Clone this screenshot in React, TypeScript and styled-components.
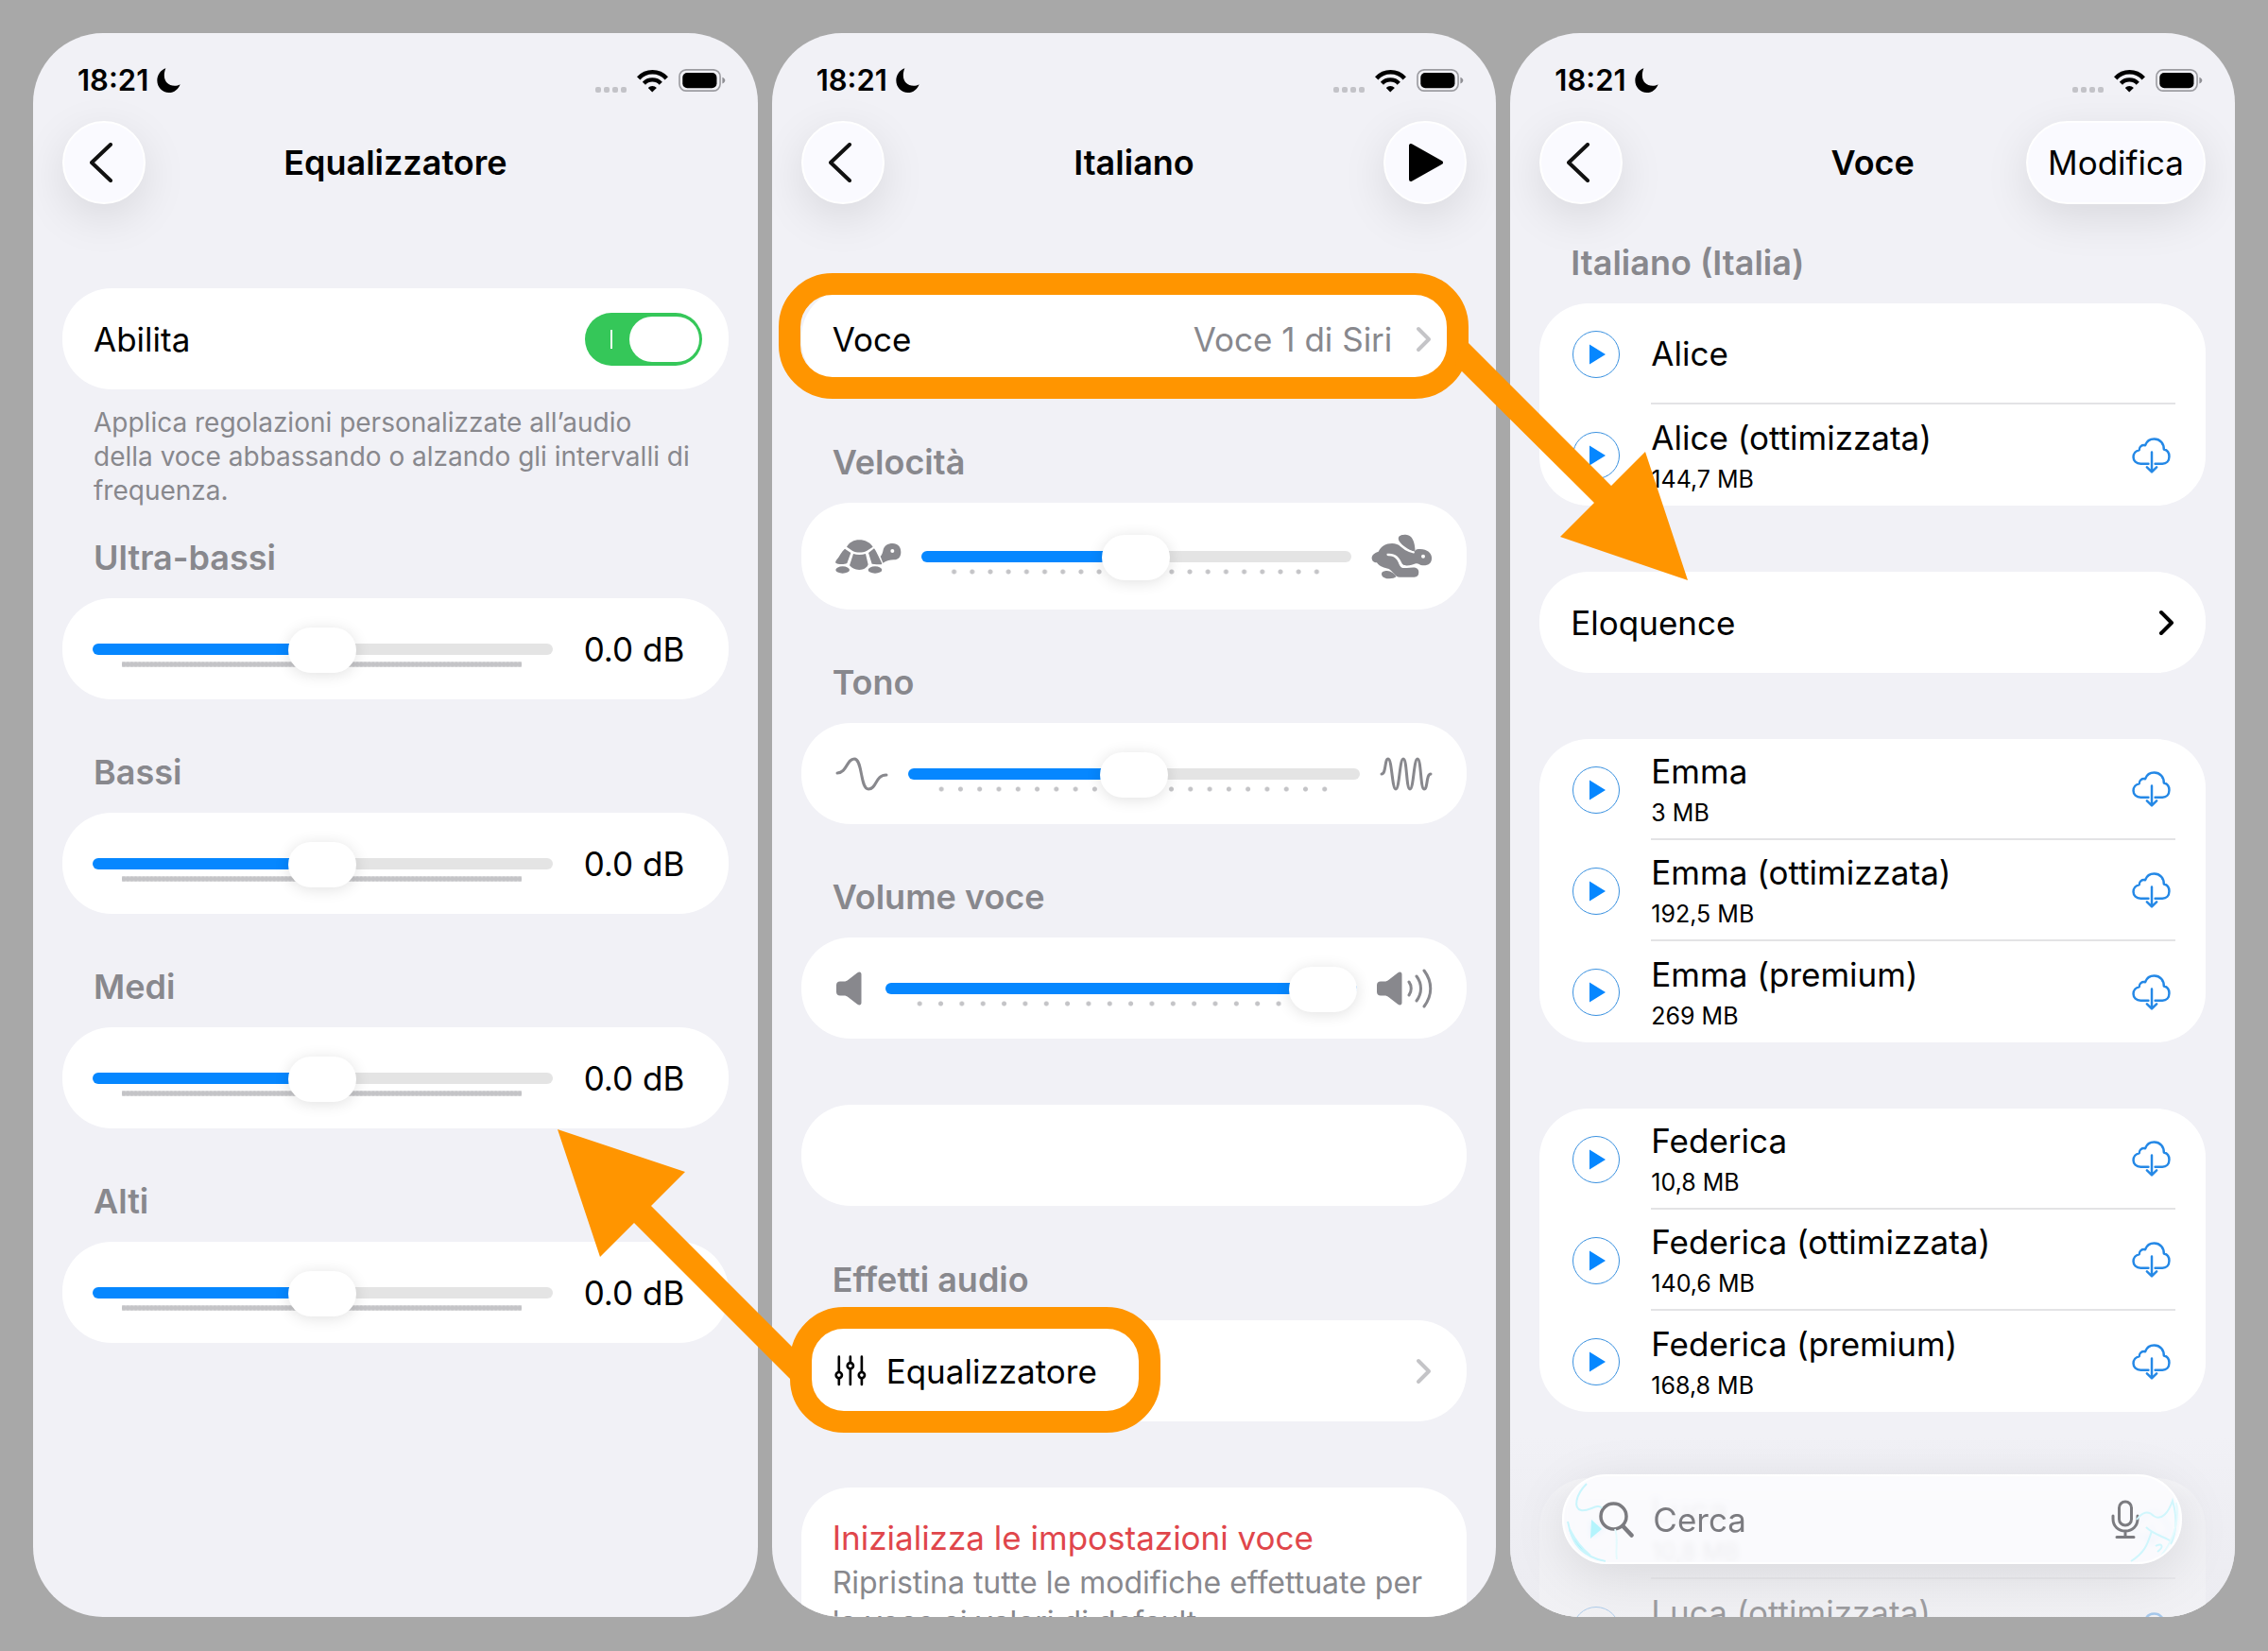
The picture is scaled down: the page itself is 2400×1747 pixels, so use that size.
import React, { useId, useState } from "react";
import styled, { createGlobalStyle, css } from "styled-components";

const color = {
  page: "#a8a8a8",
  screen: "#f1f1f6",
  card: "#ffffff",
  text: "#000000",
  muted: "#88888d",
  faint: "#c4c4c7",
  line: "#e3e3e5",
  track: "#e4e4e4",
  blue: "#0687ff",
  ring: "#3a91e0",
  green: "#35c759",
  red: "#e0464b",
  orange: "#ff9500",
};

const GlobalStyle = createGlobalStyle`
  *, *::before, *::after { box-sizing: border-box; }
  body {
    margin: 0;
    background: ${color.page};
    color: ${color.text};
    font-family: Inter, "Liberation Sans", sans-serif;
    font-size: 35px;
    line-height: 44px;
  }
  button, input { font: inherit; color: inherit; }
  h1, h2, p, ul { margin: 0; padding: 0; font: inherit; }
  svg { display: block; flex: none; }
`;

/* ---------- screens ---------- */

const Board = styled.main`
  position: relative;
  display: grid;
  grid-template-columns: repeat(3, 1fr);
  gap: 15px;
  height: 100vh;
  padding: 35px 35px 36px;
`;

const Screen = styled.section`
  position: relative;
  min-width: 0;
  overflow: hidden;
  border-radius: 74px;
  background: ${color.screen};
`;

const StatusBar = styled.div`
  display: flex;
  align-items: center;
  justify-content: space-between;
  padding: 31px 34px 24px 47px;
  font-size: 31px;
  font-weight: 600;
  line-height: 38px;
`;

const StatusGroup = styled.div`
  display: flex;
  align-items: center;
  gap: 9px;
`;

const SignalGroup = styled(StatusGroup)`
  gap: 11px;
`;

const SignalDots = styled.span`
  display: flex;
  align-self: flex-end;
  gap: 3px;
`;

const SignalDot = styled.i`
  width: 6px;
  height: 6px;
  border-radius: 2px;
  background: #c3c3c8;
`;

const NavBar = styled.header`
  display: grid;
  grid-template-columns: 1fr auto 1fr;
  align-items: center;
  height: 88px;
  padding: 0 31px;
`;

const NavTitle = styled.h1`
  && {
    font-size: 36px;
    font-weight: 600;
  }
`;

const NavButton = styled.button<{ $wide?: boolean; $end?: boolean }>`
  display: flex;
  align-items: center;
  justify-content: center;
  justify-self: ${(p) => (p.$end ? "end" : "start")};
  width: ${(p) => (p.$wide ? "190px" : "88px")};
  height: 88px;
  padding: 0;
  border: 2px solid #ffffff;
  border-radius: 44px;
  background: #fafaff;
  box-shadow: 0 14px 48px rgba(0, 0, 0, 0.1);
`;

const Content = styled.div<{ $compact?: boolean }>`
  display: flex;
  flex-direction: column;
  gap: 70px;
  padding: ${(p) => (p.$compact ? "40px" : "89px")} 31px 0;
`;

/* ---------- cards and rows ---------- */

const Group = styled.section<{ $pull?: number }>`
  display: flex;
  flex-direction: column;
  gap: 21px;
  margin-top: ${(p) => -(p.$pull ?? 0)}px;
`;

const heading = css`
  padding: 0 33px;
  color: ${color.muted};
  font-size: 36px;
  font-weight: 600;
`;

const GroupLabel = styled.label`
  ${heading}
`;

const GroupTitle = styled.h2`
  && { ${heading} }
`;

const Card = styled.div`
  position: relative;
  min-height: 107px;
  border-radius: 52px;
  background: ${color.card};
`;

const cardRow = css`
  display: flex;
  align-items: center;
  min-height: 107px;
  color: inherit;
  text-decoration: none;
`;

const LinkRow = styled.a<{ $tight?: boolean }>`
  ${cardRow}
  padding: 0 ${(p) => (p.$tight ? "33px" : "37px")} 0 33px;
`;

const ToggleRow = styled.label`
  ${cardRow}
  justify-content: space-between;
  padding: 0 28px 0 33px;
`;

const RowText = styled.span`
  flex: 1;
`;

const RowValue = styled.span`
  margin-right: 24px;
  color: ${color.muted};
`;

const RowIcon = styled.span`
  margin: 0 21px 0 2px;
`;

const Footnote = styled.p`
  && {
    margin: -4px 0 0;
    padding: 0 33px;
    color: ${color.muted};
    font-size: 28px;
    line-height: 36px;
  }
`;

const Switch = styled.input`
  appearance: none;
  position: relative;
  width: 124px;
  height: 56px;
  margin: 0;
  border-radius: 28px;
  background: ${color.green};

  &::before {
    content: "";
    position: absolute;
    top: 18px;
    left: 27px;
    width: 2px;
    height: 20px;
    background: #ffffff;
  }

  &::after {
    content: "";
    position: absolute;
    top: 4px;
    right: 3px;
    width: 74px;
    height: 48px;
    border-radius: 24px;
    background: #ffffff;
  }

  &:not(:checked) { background: ${color.track}; }
  &:not(:checked)::after { right: 47px; }
`;

const ResetCard = styled(Card)`
  display: flex;
  flex-direction: column;
  align-items: flex-start;
  gap: 5px;
  padding: 31px 33px;
`;

const ResetButton = styled.button`
  padding: 0;
  border: 0;
  background: none;
  color: ${color.red};
`;

const ResetNote = styled.p`
  && {
    color: ${color.muted};
    font-size: 32px;
    line-height: 42px;
  }
`;

/* ---------- sliders ---------- */

const SliderRow = styled.div<{ $tall?: boolean; $icons?: boolean }>`
  display: flex;
  align-items: center;
  gap: ${(p) => (p.$icons ? "21px" : "33px")};
  height: ${(p) => (p.$tall ? "113px" : "107px")};
  padding: 0 ${(p) => (p.$icons ? "36px" : "32px")};
  color: ${color.muted};
`;

const SliderBox = styled.div`
  position: relative;
  display: flex;
  flex: 1;
  min-width: 0;
`;

const Ticks = styled.div<{ $count: number }>`
  position: absolute;
  top: 37px;
  left: ${(p) => (p.$count > 50 ? "31px" : "25px")};
  right: ${(p) => (p.$count > 50 ? "33px" : "27px")};
  height: 6px;
  background-image: radial-gradient(
    circle at center,
    ${color.faint} 2px,
    ${(p) => (p.$count > 50 ? "rgba(196, 196, 199, 0.6)" : "rgba(196, 196, 199, 0)")} 3px
  );
  background-size: calc(100% / ${(p) => p.$count}) 6px;
`;

const Range = styled.input`
  appearance: none;
  position: relative;
  width: 100%;
  height: 48px;
  margin: 0;
  background: none;

  &::-webkit-slider-runnable-track {
    height: 12px;
    border-radius: 6px;
    background: linear-gradient(
      to right,
      ${color.blue} var(--fill),
      ${color.track} var(--fill)
    );
  }

  &::-webkit-slider-thumb {
    appearance: none;
    width: 72px;
    height: 48px;
    margin-top: -17px;
    border-radius: 24px;
    background: #ffffff;
    box-shadow: 0 2px 16px rgba(0, 0, 0, 0.12);
  }
`;

const Value = styled.output`
  width: 121px;
  color: ${color.text};
  white-space: nowrap;
`;

/* ---------- voices ---------- */

const VoiceList = styled.ul`
  list-style: none;
`;

const VoiceRow = styled.li`
  display: flex;
  align-items: center;
  gap: 33px;
  padding: 0 32px 0 35px;
`;

const PlayButton = styled.button`
  display: flex;
  align-items: center;
  justify-content: center;
  flex: none;
  width: 50px;
  height: 50px;
  padding: 0;
  border: 1px solid ${color.ring};
  border-radius: 50%;
  background: none;
`;

const VoiceBody = styled.div`
  display: flex;
  flex: 1;
  align-items: center;
  justify-content: space-between;
  height: 107px;
  padding-right: 5px;

  ${VoiceRow}:not(:last-child) & {
    border-bottom: 2px solid ${color.line};
  }
`;

const VoiceText = styled.div`
  display: flex;
  flex-direction: column;
  gap: 7px;
`;

const VoiceSize = styled.span`
  font-size: 25px;
  line-height: 30px;
`;

const IconButton = styled.button`
  padding: 0;
  border: 0;
  background: none;
`;

const Veil = styled.div`
  position: absolute;
  inset: auto 0 0;
  height: 190px;
  background: linear-gradient(
    rgba(240, 240, 245, 0),
    rgba(238, 238, 243, 0.8) 35%,
    rgba(233, 233, 238, 0.66)
  );
`;

const SearchField = styled.label`
  position: absolute;
  right: 56px;
  bottom: 56px;
  left: 55px;
  display: flex;
  align-items: center;
  gap: 20px;
  height: 95px;
  padding: 0 43px 0 37px;
  overflow: hidden;
  border: 2px solid #ffffff;
  border-radius: 48px;
  background: rgba(252, 252, 255, 0.8);
  backdrop-filter: blur(3px);
  box-shadow: 0 12px 56px rgba(0, 0, 0, 0.1);
  color: #7b7b80;
`;

const SearchInput = styled.input`
  flex: 1;
  min-width: 0;
  padding: 0;
  border: 0;
  outline: 0;
  background: none;

  &::placeholder { color: #7b7b80; opacity: 1; }
`;

const Glint = styled.svg<{ $end?: boolean }>`
  position: absolute;
  top: 0;
  ${(p) => (p.$end ? "right: 0;" : "left: 0;")}
`;

/* ---------- annotations ---------- */

const Ring = styled.span<{ $short?: boolean }>`
  position: absolute;
  top: ${(p) => (p.$short ? "-14px" : "-16px")};
  left: ${(p) => (p.$short ? "-12px" : "-24px")};
  ${(p) => (p.$short ? "width: 392px;" : "right: -2px;")}
  height: 133px;
  border: 23px solid ${color.orange};
  border-radius: 57px;
  pointer-events: none;
`;

const Arrows = styled.svg`
  position: absolute;
  inset: 0;
  width: 100%;
  height: 100%;
  fill: ${color.orange};
  pointer-events: none;
`;

/* ---------- icons ---------- */

const Moon = () => (
  <svg width="25" height="26" viewBox="0 0 24 25" fill="#000">
    <path d="M9 .3C8 2.5 7.5 5 7.5 7.5 7.5 14 12 18 18 18c2 0 4-.5 5.7-1.5C22 21.5 17.5 25 12.3 25 5.5 25 .3 19.5.3 12.8.3 7 3.8 2.1 9 .3Z" />
  </svg>
);

const Wifi = () => (
  <svg width="33" height="25" viewBox="221 64 98 74" fill="none" stroke="#000">
    <path d="M226 93C250 67 290 67 314 93" strokeWidth="14" />
    <path d="M243 109C257 94 282 94 296 109" strokeWidth="13" />
    <path d="M256 123C263 115 276 115 283 123L269 137Z" fill="#000" stroke="none" />
  </svg>
);

const Battery = () => (
  <svg width="50" height="24" viewBox="348 66 152 72">
    <rect x="351" y="68" width="131" height="68" rx="22" fill="none" stroke="#9c9ca1" strokeWidth="5" />
    <rect x="361" y="78" width="110" height="49" rx="15" />
    <path d="M489 92C496 95 498 99 498 102S496 110 489 113Z" fill="#8f8f94" />
  </svg>
);

const BackArrow = () => (
  <svg width="30" height="42" viewBox="0 0 30 42" fill="none" stroke="#111" strokeWidth="4" strokeLinecap="round" strokeLinejoin="round">
    <path d="M22 2 2 21 22 40" />
  </svg>
);

const PlayLarge = () => (
  <svg width="38" height="42" viewBox="-1 0 38 42" stroke="#000" strokeWidth="4" strokeLinejoin="round">
    <path d="M3 3v36L35 21Z" />
  </svg>
);

const PlaySmall = () => (
  <svg width="20" height="22" viewBox="0 0 20 22" fill={color.blue}>
    <path d="M3 .5v21L20 11Z" />
  </svg>
);

const Chevron = ({ dark }: { dark?: boolean }) => (
  <svg
    width="18"
    height="28"
    viewBox="0 0 18 28"
    fill="none"
    stroke={dark ? "#000" : color.faint}
    strokeWidth="4"
    strokeLinecap="round"
    strokeLinejoin="round"
  >
    <path d="M4 3 15 14 4 25" />
  </svg>
);

const CloudDownload = () => (
  <svg width="41" height="38" viewBox="0 0 40 37" fill="none" stroke="#2488e6" strokeWidth="2.4" strokeLinecap="round" strokeLinejoin="round">
    <path d="M17 27H9C4.500 27 1.500 24 1.500 20.200 1.500 16.500 4 13.500 7.500 13 7.500 9.300 10.200 7.300 13.700 8 15.200 4 18.600 1.500 23 1.500 29 1.500 33 6 33 12.200 36.500 13 38.500 16 38.500 19.500 38.500 24 35.500 27 31.500 27H24" />
    <path d="M20.500 15V35M15.500 30.500 20.500 35.500 25.500 30.500" />
  </svg>
);

const Turtle = () => (
  <svg width="70" height="38" viewBox="44 62 210 114" fill={color.muted}>
    <path d="M80 88C88 74 102 66 120 66S154 74 163 88L143 101C130 107 111 107 99 101Z" />
    <path d="M101 110C113 114 128 114 140 110L148 144C146 153 134 161 120 161S95 154 89 147Z" />
    <path d="M74 94 93 107 81 140C72 144 61 143 52 142 43 141 43 136 47 130 58 118 62 104 74 94Z" />
    <path d="M167 93 149 107 160 142C170 144 179 143 190 144L192 141 181 118C176 108 172 100 167 93Z" />
    <path d="M226 77C242 77 252 88 252 104S244 129 230 129C217 129 208 131 195 139L187 118C193 112 194 105 196 97 199 85 210 77 226 77Z" />
    <ellipse cx="67" cy="161" rx="22" ry="11" />
    <ellipse cx="170" cy="161" rx="22" ry="11" />
    <circle cx="225" cy="101" r="6" fill="#fff" />
  </svg>
);

const Rabbit = () => (
  <svg width="65" height="48" viewBox="35 47 192 143" fill={color.muted}>
    <path d="M57 103C65 86 80 77 100 77 122 78 140 92 156 101 164 106 170 105 176 96 205 90 225 105 225 122S215 147 196 146C188 146 184 139 175 140 166 142 158 147 146 147 134 147 132 142 129 136 122 118 108 106 84 109 82 114 84 116 88 116 110 115 118 130 122 142 126 152 132 156 146 154L166 153C178 153 184 158 184 168 184 178 180 183 170 183H124C109 183 104 165 90 157 76 154 60 150 52 137 42 137 36 131 36 122 37 112 46 107 57 103Z" />
    <path d="M120 60C121 51 132 49 143 49 164 50 172 72 173 102 166 104 150 96 138 86 128 78 119 69 120 60Z" />
    <path d="M67 174C66 166 74 163 84 163 96 163 108 172 113 182 104 190 70 192 67 174Z" />
    <path d="M116 72C128 86 148 101 168 105" fill="none" stroke="#fff" strokeWidth="6" strokeLinecap="round" />
    <circle cx="198" cy="118" r="6" fill="#fff" />
  </svg>
);

const LowWave = () => (
  <svg width="56" height="36" viewBox="0 0 56 36" fill="none" stroke={color.muted} strokeWidth="3" strokeLinecap="round">
    <path d="M2 17C12 17 12 2 20 2 29 2 26 34 35 34 44 34 42 19 54 19" />
  </svg>
);

const HighWave = () => (
  <svg width="56" height="36" viewBox="0 0 56 36" fill="none" stroke={color.muted} strokeWidth="3" strokeLinecap="round">
    <path d="M2 18C7 18 5 2 9 2S13 34 17 34 21 2 25 2 28 34 32 34 36 2 40 2 43 34 47 34 49 18 54 18" />
  </svg>
);

const speakerPath =
  "M4 11.500H8C10 11.500 11 11 13 9.500L22 2.500C24.500.800 26.500 1.500 26.500 4V34C26.500 36.500 24.500 37.300 22 35.500L13 28.500C11 27 10 26.500 8 26.500H4C1.500 26.500 0 25 0 22.500V15.500C0 13 1.500 11.500 4 11.500Z";

const SpeakerLow = () => (
  <svg width="32" height="38" viewBox="-1 0 32 38" fill={color.muted}>
    <path d={speakerPath} />
  </svg>
);

const SpeakerHigh = () => (
  <svg width="59" height="42" viewBox="0 0 59 42" fill={color.muted}>
    <path d={speakerPath} transform="translate(0 2)" />
    <path
      d="M34 14C37 18 37 24 34 28M42 8C48 16 48 26 42 34M50 2C59 14 59 28 50 40"
      fill="none"
      stroke={color.muted}
      strokeWidth="3"
      strokeLinecap="round"
    />
  </svg>
);

const Faders = () => (
  <svg width="34" height="33" viewBox="971 770 102 100" fill="#fff" stroke="#000" strokeWidth="8" strokeLinecap="round">
    <path d="M985 775V864M1021.500 775V864M1058 775V864" />
    <circle cx="985" cy="834" r="9.500" />
    <circle cx="1021.500" cy="804" r="9.500" />
    <circle cx="1058" cy="834" r="9.500" />
  </svg>
);

const Magnifier = () => (
  <svg width="37" height="38" viewBox="0 0 37 38" fill="none" stroke="currentColor" strokeWidth="3.500" strokeLinecap="round">
    <circle cx="15.500" cy="15.500" r="13.500" />
    <path d="M25.500 26 34.500 35.500" strokeWidth="4.500" />
  </svg>
);

const Microphone = () => (
  <svg width="30" height="42" viewBox="0 0 30 42" fill="none" stroke="currentColor" strokeWidth="3" strokeLinecap="round">
    <rect x="8.500" y="2" width="13" height="25" rx="6.500" />
    <path d="M2 17V20C2 28 7.500 33 15 33S28 28 28 20V17M15 33V39M6 39.500H24" />
  </svg>
);

/* ---------- composed parts ---------- */

function PhoneStatus() {
  return (
    <StatusBar>
      <StatusGroup>
        18:21
        <Moon />
      </StatusGroup>
      <SignalGroup>
        <SignalGroup>
          <SignalDots>
            <SignalDot />
            <SignalDot />
            <SignalDot />
            <SignalDot />
          </SignalDots>
          <Wifi />
        </SignalGroup>
        <Battery />
      </SignalGroup>
    </StatusBar>
  );
}

type SliderProps = {
  label: string;
  start?: number;
  ticks?: number;
  low?: React.ReactNode;
  high?: React.ReactNode;
  tall?: boolean;
  decibel?: boolean;
  pull?: number;
};

function SliderGroup({ label, start = 50, ticks = 21, low, high, tall, decibel, pull = 15 }: SliderProps) {
  const id = useId();
  const [value, setValue] = useState(start);
  return (
    <Group $pull={pull}>
      <GroupLabel htmlFor={id}>{label}</GroupLabel>
      <Card>
        <SliderRow $tall={tall} $icons={!decibel}>
          {low}
          <SliderBox>
            <Ticks $count={ticks} />
            <Range
              id={id}
              type="range"
              min={0}
              max={100}
              value={value}
              onChange={(e) => setValue(Number(e.target.value))}
              style={{ "--fill": `${value}%` } as React.CSSProperties}
            />
          </SliderBox>
          {high}
          {decibel && <Value htmlFor={id}>{((value - 50) / 5).toFixed(1)} dB</Value>}
        </SliderRow>
      </Card>
    </Group>
  );
}

type Voice = { name: string; size?: string };

function Voices({ items }: { items: Voice[] }) {
  return (
    <Card>
      <VoiceList>
        {items.map((voice) => (
          <VoiceRow key={voice.name}>
            <PlayButton aria-label={`Riproduci ${voice.name}`}>
              <PlaySmall />
            </PlayButton>
            <VoiceBody>
              <VoiceText>
                <span>{voice.name}</span>
                {voice.size && <VoiceSize>{voice.size}</VoiceSize>}
              </VoiceText>
              {voice.size && (
                <IconButton aria-label={`Scarica ${voice.name}`}>
                  <CloudDownload />
                </IconButton>
              )}
            </VoiceBody>
          </VoiceRow>
        ))}
      </VoiceList>
    </Card>
  );
}

function EqualizerScreen() {
  const [enabled, setEnabled] = useState(true);
  return (
    <Screen>
      <PhoneStatus />
      <NavBar>
        <NavButton aria-label="Indietro">
          <BackArrow />
        </NavButton>
        <NavTitle>Equalizzatore</NavTitle>
      </NavBar>
      <Content>
        <Group>
          <Card>
            <ToggleRow>
              Abilita
              <Switch type="checkbox" checked={enabled} onChange={(e) => setEnabled(e.target.checked)} />
            </ToggleRow>
          </Card>
          <Footnote>
            Applica regolazioni personalizzate all’audio della voce abbassando o alzando gli intervalli di frequenza.
          </Footnote>
        </Group>
        <SliderGroup label="Ultra-bassi" ticks={101} decibel pull={39} />
        <SliderGroup label="Bassi" ticks={101} decibel />
        <SliderGroup label="Medi" ticks={101} decibel />
        <SliderGroup label="Alti" ticks={101} decibel />
      </Content>
    </Screen>
  );
}

function LanguageScreen() {
  return (
    <Screen>
      <PhoneStatus />
      <NavBar>
        <NavButton aria-label="Indietro">
          <BackArrow />
        </NavButton>
        <NavTitle>Italiano</NavTitle>
        <NavButton $end aria-label="Riproduci">
          <PlayLarge />
        </NavButton>
      </NavBar>
      <Content>
        <Card>
          <LinkRow href="#voce">
            <RowText>Voce</RowText>
            <RowValue>Voce 1 di Siri</RowValue>
            <Chevron />
          </LinkRow>
          <Ring />
        </Card>
        <SliderGroup label="Velocità" low={<Turtle />} high={<Rabbit />} tall />
        <SliderGroup label="Tono" low={<LowWave />} high={<HighWave />} />
        <SliderGroup label="Volume voce" start={100} ticks={20} low={<SpeakerLow />} high={<SpeakerHigh />} />
        <Card />
        <Group $pull={14}>
          <GroupTitle>Effetti audio</GroupTitle>
          <Card>
            <LinkRow href="#equalizzatore">
              <RowIcon>
                <Faders />
              </RowIcon>
              <RowText>Equalizzatore</RowText>
              <Chevron />
            </LinkRow>
            <Ring $short />
          </Card>
        </Group>
        <ResetCard>
          <ResetButton>Inizializza le impostazioni voce</ResetButton>
          <ResetNote>Ripristina tutte le modifiche effettuate per la voce ai valori di default.</ResetNote>
        </ResetCard>
      </Content>
    </Screen>
  );
}

function VoiceScreen() {
  return (
    <Screen>
      <PhoneStatus />
      <NavBar>
        <NavButton aria-label="Indietro">
          <BackArrow />
        </NavButton>
        <NavTitle>Voce</NavTitle>
        <NavButton $wide $end>
          Modifica
        </NavButton>
      </NavBar>
      <Content $compact>
        <Group>
          <GroupTitle>Italiano (Italia)</GroupTitle>
          <Voices items={[{ name: "Alice" }, { name: "Alice (ottimizzata)", size: "144,7 MB" }]} />
        </Group>
        <Card>
          <LinkRow $tight href="#eloquence">
            <RowText>Eloquence</RowText>
            <Chevron dark />
          </LinkRow>
        </Card>
        <Voices
          items={[
            { name: "Emma", size: "3 MB" },
            { name: "Emma (ottimizzata)", size: "192,5 MB" },
            { name: "Emma (premium)", size: "269 MB" },
          ]}
        />
        <Voices
          items={[
            { name: "Federica", size: "10,8 MB" },
            { name: "Federica (ottimizzata)", size: "140,6 MB" },
            { name: "Federica (premium)", size: "168,8 MB" },
          ]}
        />
        <Voices
          items={[
            { name: "Luca", size: "10,8 MB" },
            { name: "Luca (ottimizzata)", size: "169,1 MB" },
          ]}
        />
      </Content>
      <Veil />
      <SearchField>
        <Glint width="64" height="92" viewBox="0 0 64 92" fill="none" stroke="#c9f5fc" strokeWidth="2">
          <path d="M24 8C12 20 10 34 18 36S36 28 40 34M4 48C8 70 20 86 44 90" />
          <path d="M6 56C10 72 18 80 28 84C18 76 12 68 6 56Z" fill="#9df0fb" />
          <path d="M29 46 40 56 28 66Z" fill="#b4f4fc" stroke="none" />
          <path d="M54 56C58 66 54 78 56 88" stroke="#e4fafd" />
        </Glint>
        <Magnifier />
        <SearchInput type="search" placeholder="Cerca" aria-label="Cerca" />
        <Microphone />
        <Glint $end width="64" height="92" viewBox="0 0 64 92" fill="none" stroke="#d0f6fc" strokeWidth="2">
          <path d="M18 46C24 38 30 36 36 42 44 48 52 38 56 26C60 40 62 56 54 72M28 54C36 62 48 64 56 70M34 58C30 70 28 80 12 90M38 74C44 70 48 74 40 80" />
          <path d="M60 28C63 46 58 66 44 84" stroke="#e4fafd" />
        </Glint>
      </SearchField>
    </Screen>
  );
}

export default function App() {
  return (
    <>
      <GlobalStyle />
      <Board>
        <EqualizerScreen />
        <LanguageScreen />
        <VoiceScreen />
        <Arrows viewBox="0 0 2400 1747" preserveAspectRatio="none" aria-hidden="true">
          <path d="M590 1195 725 1240 689 1276 848 1435 848 1471 671 1294 635 1330Z" />
          <path d="M1786 614 1651 568 1687 532 1540 386 1550 359 1705 514 1741 478Z" />
        </Arrows>
      </Board>
    </>
  );
}
